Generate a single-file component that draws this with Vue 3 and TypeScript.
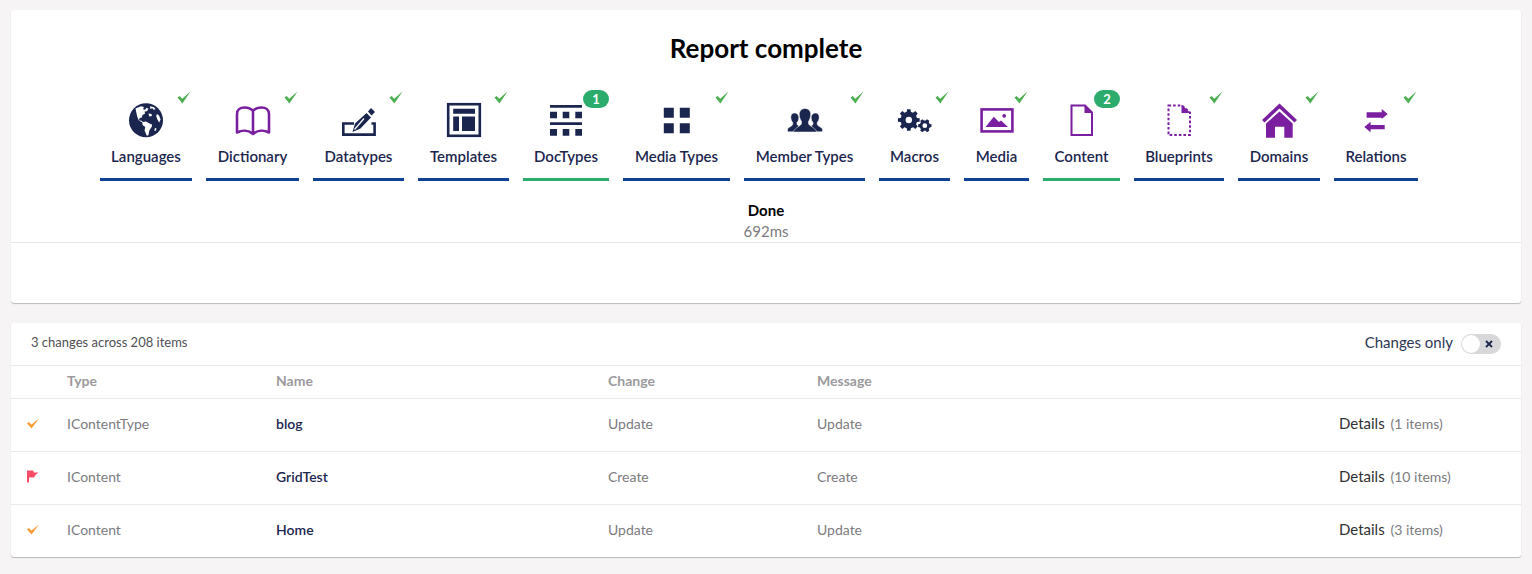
<template>
  <div class="page">
    <section class="card report">
      <h1 class="title">Report complete</h1>
      <div class="steps">
        <div v-for="step in steps" :key="step.name" class="step" :class="{ changed: step.badge }" :style="{ width: step.width + 'px' }">
          <span v-if="step.badge" class="badge">{{ step.badge }}</span>
          <svg v-else class="tick" viewBox="0 0 14 13"><path d="M0.500 6.500 2.600 5 5.200 7.800 13.500 0.500 5.400 12.500Z" /></svg>

          <svg class="icon" viewBox="0 0 34 34">
            <template v-if="step.icon === 'globe'">
              <circle cx="17" cy="17.300" r="17" fill="#1b264f" />
              <path fill="#fff" d="M6.500 5.500 12 3.200l3 .8-1 2.200 2 .6 1.500-2 2 1-1.500 2.400-2.400.4.4 2.200-2.600 1.200-.6 2.600-2 .4-1 2.200 2.600.6 1.600 1.200 3-.6 4 2.400 2 .6-.2 2.400-2.400 3.400-1 5-1.600.6-2.200-5.200.6-3.600-2.600-2-.2-2.400-3.600-2.200-1.600-3.800Z" />
              <path fill="#fff" d="M21 3.200l4 1 1.600 2-2.200.6-.8-1.600-2.400.6ZM19.500 10.500l3 .4.4 2.200-2.600.4ZM28 11l2 1.600 1.600 4-1.400 3-1.800-3-1.200-3.600ZM26 25l1.600.6-1 2.400-1.400-.4Z" />
            </template>
            <path v-else-if="step.icon === 'book'" fill="none" stroke="#7a1fa0" stroke-width="2.600" stroke-linejoin="round"
              d="M17 8C15 5.500 12 4.500 8.500 4.500 4 4.500 1 7 1 11V29.500C6 27 12.500 27 17 31 21.500 27 28 27 33 29.500V11C33 7 30 4.500 25.500 4.500 22 4.500 19 5.500 17 8ZM17 8V30" />
            <template v-else-if="step.icon === 'pen'">
              <path fill="none" stroke="#1b264f" stroke-width="2.600" d="M12 20.500H1.300V31.600H32.600V20.500H29.500" />
              <path fill="#1b264f" d="M10.500 29 13 20.500 24.500 10 29 14.500 18.500 25.500ZM26 8.500l3-3.500 4 4-3.500 3.500Z" />
              <path stroke="#fff" stroke-width="1.200" d="M12.500 26.500 22 15.500" />
            </template>
            <template v-else-if="step.icon === 'layout'">
              <rect x="1.200" y="1.200" width="31.600" height="31.600" fill="none" stroke="#1b264f" stroke-width="2.600" />
              <path fill="#1b264f" d="M6.200 5.800H28v5H6.200ZM6.200 13.600H12V28H6.200ZM15 13.600H28V28H15Z" />
            </template>
            <path v-else-if="step.icon === 'rows'" fill="#1b264f"
              d="M1 2H33V4.700H1ZM1 8.700H8V15.300H1ZM13.700 8.700H20.300V15.300H13.700ZM26.300 8.700H33V15.300H26.300ZM1 19.300H33V22H1ZM1 26H8V32.700H1ZM13.700 26H20.300V32.700H13.700ZM26.300 26H33V32.700H26.300Z" />
            <path v-else-if="step.icon === 'grid'" fill="#1b264f"
              d="M3.800 4.700H13.800V14.700H3.800ZM19.800 4.700H29.800V14.700H19.800ZM3.800 20.300H13.800V30.300H3.800ZM19.800 20.300H29.800V30.300H19.800Z" />
            <template v-else-if="step.icon === 'members'">
              <path fill="#1b264f" stroke="#fff" stroke-width="0.500"
                d="M6.500 10C9.500 10 11 12.500 10.800 15 10.700 17 9.800 18.500 9 19.500V21.500L11 23 6 28.800H-.5V26C1 24 4.500 23 4.800 21.300V19.500C4 18.500 3 17 2.800 15 2.600 12.500 3.800 10 6.500 10ZM27.500 10C30.200 10 31.500 12.500 31.200 15 31 17 30 18.500 29.200 19.500V21.300C29.500 23 33 24 34.500 26V28.800H28L23 23 25 21.500V19.500C24.200 18.500 23.300 17 23.200 15 23 12.500 24.500 10 27.500 10Z" />
              <path fill="#1b264f" stroke="#fff" stroke-width="0.500"
                d="M17 5.500C20.800 5.500 23 8.500 22.700 12 22.500 14.800 21.500 17 20.500 18.300V20.500C21 23 26.500 24 29 29H5C7.500 24 13 23 13.500 20.500V18.300C12.500 17 11.500 14.800 11.300 12 11 8.500 13.200 5.500 17 5.500Z" />
            </template>
            <path v-else-if="step.icon === 'gears'" fill="#1b264f" fill-rule="evenodd" :d="gears" />
            <template v-else-if="step.icon === 'image'">
              <rect x="1.600" y="6.400" width="30.800" height="22" fill="#fff" stroke="#7a1fa0" stroke-width="2.600" />
              <path fill="#7a1fa0" d="M5.500 24 13.800 13.800 19 19 21 17.500 28 24Z" />
              <circle cx="24.200" cy="12.800" r="1.900" fill="#7a1fa0" />
            </template>
            <template v-else-if="step.icon === 'doc'">
              <path fill="#fff" stroke="#7a1fa0" stroke-width="2" d="M6.500 2.500H20L27 9.500V32H6.500Z" />
              <path fill="#7a1fa0" d="M19.500 1.500 28 10H19.500Z" />
            </template>
            <template v-else-if="step.icon === 'blueprint'">
              <path fill="#fff" stroke="#7a1fa0" stroke-width="2" stroke-dasharray="2.600 2" d="M6.500 2.500H20L28 9.500V32H6.500Z" />
              <path fill="#7a1fa0" d="M19.500 1.500 28.500 10H19.500Z" />
            </template>
            <path v-else-if="step.icon === 'house'" fill="#7a1fa0"
              d="M17.500.5 35 17 32.500 19.500 17.500 5.500 2.500 19.500 0 17ZM17.500 8.500 30.700 20.500V34.700H22.300V23.700H13V34.700H4V20.500Z" />
            <path v-else-if="step.icon === 'arrows'" fill="#7a1fa0"
              d="M7.600 9.300H22.700V6L28.700 11 22.700 16V14.700H7.600ZM25.700 22V26.300H11.600V29.300L5.300 24 11.600 18.700V22Z" />
          </svg>

          <span class="step-name">{{ step.name }}</span>
        </div>
      </div>
      <div class="status">
        <strong>Done</strong>
        <span>692ms</span>
      </div>
      <div class="report-foot"></div>
    </section>

    <section class="card results">
      <header class="results-head">
        <span class="summary">3 changes across 208 items</span>
        <div class="filter">
          <span class="filter-label">Changes only</span>
          <span class="toggle">
            <span class="knob"></span>
            <svg class="cross" viewBox="0 0 8 8"><path d="M1 1 7 7M7 1 1 7" /></svg>
          </span>
        </div>
      </header>
      <div class="row head-row">
        <span></span>
        <span>Type</span>
        <span>Name</span>
        <span>Change</span>
        <span>Message</span>
        <span></span>
      </div>
      <div v-for="row in rows" :key="row.name" class="row item-row">
        <span class="state">
          <svg v-if="row.state === 'update'" viewBox="0 0 13 11" class="state-icon"><path fill="#f79c37" d="M0 5.500 1.800 4 4.500 6.500 12 0.500 4.600 10.500Z" /></svg>
          <svg v-else viewBox="0 0 13 13" class="state-icon"><path fill="#f74d67" d="M0 .5H2V12.500H0ZM2 .5H6L7 2.500H11.500L8.500 5 7 7.500H2Z" /></svg>
        </span>
        <span class="muted">{{ row.type }}</span>
        <span class="name">{{ row.name }}</span>
        <span class="muted">{{ row.change }}</span>
        <span class="muted">{{ row.change }}</span>
        <span class="details">Details <em>({{ row.count }} items)</em></span>
      </div>
    </section>
  </div>
</template>

<script setup lang="ts">
type Step = { name: string; icon: string; width: number; badge?: number };

const steps: Step[] = [
  { name: 'Languages', icon: 'globe', width: 92 },
  { name: 'Dictionary', icon: 'book', width: 93 },
  { name: 'Datatypes', icon: 'pen', width: 91 },
  { name: 'Templates', icon: 'layout', width: 91 },
  { name: 'DocTypes', icon: 'rows', width: 86, badge: 1 },
  { name: 'Media Types', icon: 'grid', width: 107 },
  { name: 'Member Types', icon: 'members', width: 121 },
  { name: 'Macros', icon: 'gears', width: 71 },
  { name: 'Media', icon: 'image', width: 65 },
  { name: 'Content', icon: 'doc', width: 77, badge: 2 },
  { name: 'Blueprints', icon: 'blueprint', width: 90 },
  { name: 'Domains', icon: 'house', width: 82 },
  { name: 'Relations', icon: 'arrows', width: 84 },
];

const rows = [
  { state: 'update', type: 'IContentType', name: 'blog', change: 'Update', count: 1 },
  { state: 'create', type: 'IContent', name: 'GridTest', change: 'Create', count: 10 },
  { state: 'update', type: 'IContent', name: 'Home', change: 'Update', count: 3 },
];

// toothed wheel with a hole, used for the macros icon
function gear(cx: number, cy: number, outer: number, inner: number, hole: number, teeth: number) {
  const pts: string[] = [];
  const step = (Math.PI * 2) / teeth;
  for (let i = 0; i < teeth; i++) {
    const a = i * step;
    const corners: [number, number][] = [
      [inner, a - step * 0.32],
      [outer, a - step * 0.2],
      [outer, a + step * 0.2],
      [inner, a + step * 0.32],
    ];
    for (const [r, t] of corners) {
      pts.push(`${(cx + r * Math.cos(t)).toFixed(2)} ${(cy + r * Math.sin(t)).toFixed(2)}`);
    }
  }
  const ring = `M${cx - hole} ${cy}a${hole} ${hole} 0 1 0 ${hole * 2} 0a${hole} ${hole} 0 1 0 ${-hole * 2} 0Z`;
  return `M${pts.join('L')}Z${ring}`;
}

const gears = gear(10.8, 17, 11, 8.4, 3.2, 8) + gear(26.8, 22.7, 6.8, 5.2, 2.4, 6);
</script>

<style>
body {
  background: #f6f4f4;
}
</style>

<style scoped>
.page {
  display: flex;
  flex-direction: column;
  gap: 20px;
  padding: 10px 11px 17px;
  font-family: Lato, "Liberation Sans", sans-serif;
  color: #1b264f;
}

.card {
  background: #fff;
  border-radius: 3px;
  box-shadow: 0 1px 1px rgba(0, 0, 0, 0.25);
}

.report {
  height: 293px;
  display: flex;
  flex-direction: column;
  align-items: center;
}

.title {
  margin: 22px 0 0;
  font-size: 26px;
  line-height: 32px;
  font-weight: 700;
  color: #000;
}

.steps {
  display: flex;
  margin-top: 26px;
}

.step {
  position: relative;
  flex: none;
  height: 91px;
  margin-right: 14px;
  padding-top: 13px;
  box-sizing: border-box;
  display: flex;
  flex-direction: column;
  align-items: center;
  border-bottom: 3px solid #0e4194;
  white-space: nowrap;
}

.step.changed {
  border-bottom-color: #2bac6c;
}

.tick {
  position: absolute;
  top: 1px;
  right: 1px;
  width: 14px;
  height: 13px;
  fill: #4caf50;
}

.badge {
  position: absolute;
  top: 0;
  right: 0;
  width: 26px;
  height: 18px;
  border-radius: 9px;
  background: #2bac6c;
  color: #fff;
  font-size: 13px;
  line-height: 18px;
  font-weight: 700;
  text-align: center;
}

.icon {
  width: 34px;
  height: 34px;
  overflow: visible;
}

.step-name {
  margin-top: 9px;
  font-size: 15px;
  line-height: 20px;
  font-weight: 600;
}

.status {
  margin-top: 19px;
  display: flex;
  flex-direction: column;
  align-items: center;
  line-height: 20px;
}

.status strong {
  font-size: 15px;
  color: #000;
}

.status span {
  margin-top: 1px;
  color: #7c7b80;
  font-size: 15px;
}

.report-foot {
  width: 100%;
  margin-top: 1px;
  border-top: 1px solid #e6e5e7;
}

.results-head {
  height: 42px;
  display: flex;
  align-items: center;
  justify-content: space-between;
  padding: 0 20px;
}

.summary {
  margin-bottom: 4px;
  font-size: 13px;
  color: #515054;
}

.filter {
  display: flex;
  align-items: center;
  gap: 8px;
  font-size: 15px;
  color: #2e3654;
}

.filter-label {
  margin-bottom: 4px;
}

.toggle {
  position: relative;
  width: 40px;
  height: 20px;
  border-radius: 10px;
  background: #d8d7d9;
}

.knob {
  position: absolute;
  top: 1px;
  left: 1px;
  width: 18px;
  height: 18px;
  border-radius: 50%;
  background: #fff;
}

.cross {
  position: absolute;
  top: 6px;
  right: 8px;
  width: 8px;
  height: 8px;
  fill: none;
  stroke: #1b264f;
  stroke-width: 1.800;
}

.row {
  display: grid;
  grid-template-columns: 56px 209px 332px 209px 522px 1fr;
  align-items: center;
  box-sizing: border-box;
  padding-bottom: 3px;
  border-top: 1px solid #e9e9eb;
  font-size: 14px;
}

.head-row {
  height: 33px;
  font-weight: 700;
  color: #9b9a9d;
}

.item-row {
  height: 53px;
}

.state {
  padding-left: 16px;
  display: flex;
}

.state-icon {
  width: 13px;
  height: 13px;
}

.muted {
  color: #7c7b80;
}

.name {
  font-weight: 600;
}

.details {
  font-size: 15px;
  line-height: 18px;
  color: #303033;
  white-space: nowrap;
}

.details em {
  margin-left: 2px;
  font-style: normal;
  font-size: 14px;
  color: #7c7b80;
}
</style>
